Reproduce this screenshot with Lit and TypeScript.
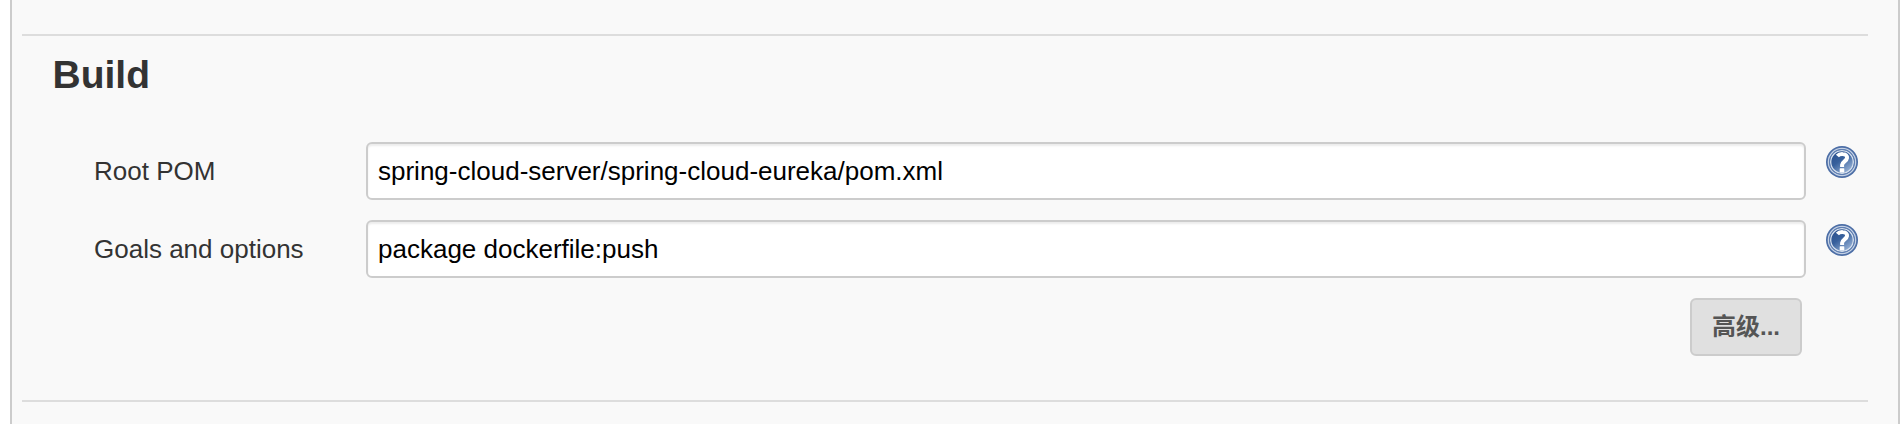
import { LitElement, html, css } from "lit";
import { customElement, property } from "lit/decorators.js";

@customElement("help-icon")
class HelpIcon extends LitElement {
  static styles = css`
    :host { display: block; width: 32px; height: 32px; }
    .icon { display: block; }
  `;
  render() {
    return html`<svg class="icon" width="32" height="32" viewBox="0 0 32 32" role="img" aria-label="Help">
      <defs>
        <linearGradient id="fill" x1="0.15" y1="0.1" x2="0.8" y2="0.95">
          <stop offset="0" stop-color="#2d5290" />
          <stop offset="0.4" stop-color="#37609c" />
          <stop offset="1" stop-color="#9ab4d8" />
        </linearGradient>
      </defs>
      <circle cx="16" cy="16" r="16" fill="#4c6ea6" />
      <circle cx="16" cy="16" r="13.6" fill="none" stroke="#c3d0e4" stroke-width="1.4" />
      <circle cx="16" cy="16" r="11.4" fill="url(#fill)" stroke="#d5dfed" stroke-width="1.5" />
      <circle cx="16" cy="16" r="12.5" fill="none" stroke="#5f7fb2" stroke-width="1" />
      <path d="M11.4 9.9C12.8 8.2 14.8 7.8 16.6 7.9C19.6 8 21.2 9.8 21 12C20.7 15.1 16.4 15.7 16.1 18.9V21" fill="none" stroke="#fff" stroke-width="4" />
      <rect x="13.7" y="22.2" width="4.6" height="4.4" rx="0.6" fill="#fff" />
    </svg>`;
  }
}

@customElement("form-row")
class FormRow extends LitElement {
  @property() label = "";
  @property() value = "";
  static styles = css`
    :host { display: block; }
    .row { display: grid; grid-template-columns: 272px 1440px 32px; column-gap: 0; align-items: start; }
    .label { font-size: 26px; line-height: 58px; color: #333; white-space: nowrap; }
    .field {
      box-sizing: border-box; width: 1440px; height: 58px; margin: 0; padding: 0 10px;
      border: 2px solid #ccc; border-radius: 6px; background: #fff; color: #000;
      font: 26px "Liberation Sans", Arial, sans-serif; outline: none;
      box-shadow: inset 0 2px 2px rgba(0, 0, 0, 0.075);
    }
    .help { margin: 4px 0 0 20px; }
  `;
  render() {
    return html`<div class="row">
      <label class="label" for="field">${this.label}</label>
      <input id="field" class="field" type="text" spellcheck="false" .value=${this.value} />
      <help-icon class="help"></help-icon>
    </div>`;
  }
}

@customElement("app-root")
class AppRoot extends LitElement {
  static styles = css`
    :host { display: block; height: 424px; overflow: hidden; background: #fff; font-family: "Liberation Sans", Arial, "Noto Sans CJK SC", sans-serif; }
    .panel { box-sizing: border-box; height: 424px; margin: 0 2px 0 10px; padding: 34px 30px 0 10px; border: solid #ccc; border-width: 0 2px; background: #f9f9f9; }
    .section { box-sizing: border-box; height: 368px; border: solid #ddd; border-width: 2px 0; }
    .title { margin: 0; padding: 17px 0 0 30.5px; font-size: 39px; line-height: 44px; font-weight: bold; color: #333; }
    .rows { display: flex; flex-direction: column; gap: 20px; padding: 45px 0 0 72px; }
    .actions { display: flex; justify-content: flex-end; padding: 20px 66px 0 0; }
    .advanced {
      box-sizing: border-box; width: 112px; height: 58px; margin: 0; padding: 0 0 6px;
      border: 2px solid #ccc; border-radius: 6px; background: #e0e0e0; color: #555;
      font: bold 24px "Liberation Sans", Arial, "Noto Sans CJK SC", sans-serif; white-space: nowrap;
    }
  `;
  render() {
    return html`<main class="panel">
      <section class="section">
        <h1 class="title">Build</h1>
        <div class="rows">
          <form-row label="Root POM" value="spring-cloud-server/spring-cloud-eureka/pom.xml"></form-row>
          <form-row label="Goals and options" value="package dockerfile:push"></form-row>
        </div>
        <div class="actions"><button class="advanced" type="button">高级...</button></div>
      </section>
    </main>`;
  }
}
